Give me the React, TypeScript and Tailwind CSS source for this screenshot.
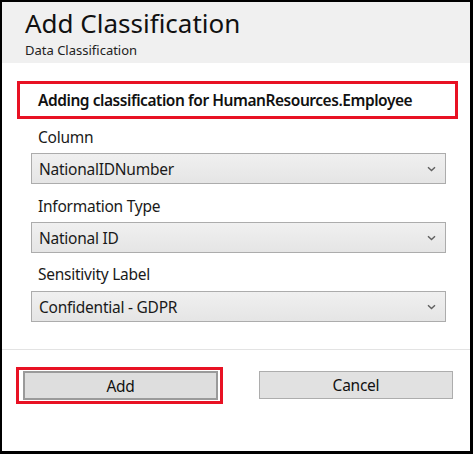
import React from "react";

function Chevron() {
  return (
    <svg width="9" height="6" viewBox="0 0 9 6" className="shrink-0">
      <path d="M1 1.2 L4.5 4.6 L8 1.2" fill="none" stroke="#606060" strokeWidth="1.4" />
    </svg>
  );
}

function Select({ value }: { value: string }) {
  return (
    <div className="ml-[29px] mr-[24px] h-[31px] border border-[#acacac] bg-linear-to-b from-[#f0f0f0] to-[#e5e5e5] flex items-center pl-[7px] pr-[9px]">
      <span className="flex-1 text-[15.5px] tracking-[-0.25px] leading-[20px] text-[#1a1a1a] whitespace-nowrap">{value}</span>
      <Chevron />
    </div>
  );
}

function Label({ text }: { text: string }) {
  return (
    <div className="pl-[36px] text-[15.5px] tracking-[-0.25px] leading-[20px] text-[#1a1a1a] whitespace-nowrap">
      {text}
    </div>
  );
}

export default function App() {
  return (
    <div className="w-[473px] h-[454px] bg-white border-black border-l-2 border-t-2 border-r-[3px] border-b-[3px] flex flex-col font-['Noto_Sans',sans-serif]">
      <div className="h-[61px] shrink-0 bg-[#f0f0f0] pl-[23px] pt-[4px]">
        <div className="text-[26px] leading-[34px] text-[#111] whitespace-nowrap">Add Classification</div>
        <div className="mt-[2px] text-[13px] leading-[17px] text-[#222] whitespace-nowrap">Data Classification</div>
      </div>
      <div className="flex-1 flex flex-col">
        <div className="mt-[18px] ml-[15px] mr-[12px] h-[38px] border-[3px] border-[#e81123] flex items-center pl-[18px]">
          <span className="text-[15.5px] tracking-[-0.45px] font-semibold text-[#111] leading-[20px] whitespace-nowrap">
            Adding classification for HumanResources.Employee
          </span>
        </div>
        <div className="mt-[8px]">
          <Label text="Column" />
        </div>
        <div className="mt-[6px]">
          <Select value="NationalIDNumber" />
        </div>
        <div className="mt-[12px]">
          <Label text="Information Type" />
        </div>
        <div className="mt-[6px]">
          <Select value="National ID" />
        </div>
        <div className="mt-[11px]">
          <Label text="Sensitivity Label" />
        </div>
        <div className="mt-[7px]">
          <Select value="Confidential - GDPR" />
        </div>
        <div className="mt-[27px] h-px bg-[#e3e3e3]" />
        <div className="flex items-start mt-[17px]">
          <div className="ml-[14px] w-[207px] h-[37px] border-[3px] border-[#e81123] pl-[4px] pt-[1px]">
            <button className="w-[195px] h-[29px] bg-[#dedede] border-2 border-[#9a9a9a] text-[15.5px] tracking-[-0.25px] leading-[20px] text-[#111] flex items-center justify-center">
              Add
            </button>
          </div>
          <button className="ml-[36px] mt-[4px] w-[194px] h-[28px] bg-[#e1e1e1] border border-[#adadad] text-[15.5px] tracking-[-0.25px] leading-[20px] text-[#111] flex items-center justify-center">
            Cancel
          </button>
        </div>
      </div>
    </div>
  );
}
